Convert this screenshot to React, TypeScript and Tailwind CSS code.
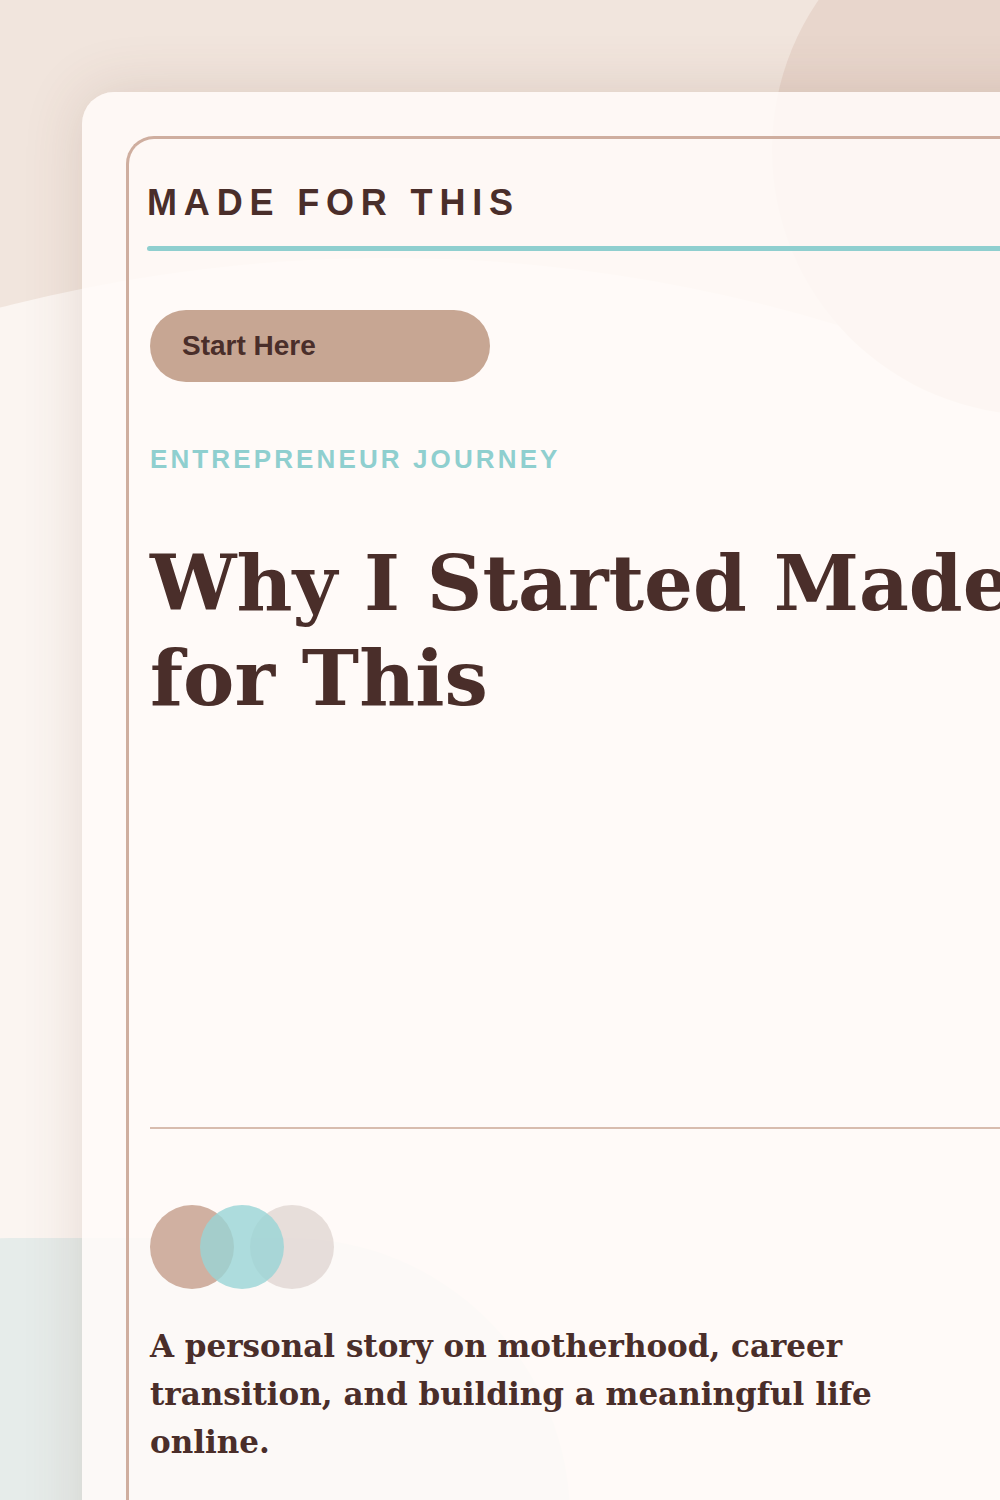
import React from 'react';

const sans = { fontFamily: '"Liberation Sans", Arial, sans-serif' };
const serif = { fontFamily: '"DejaVu Serif", Georgia, serif' };

const Backdrop = () => (
	<>
		<div className="absolute left-[-1154px] top-[258px] h-[3084px] w-[3084px] rounded-full bg-[#fbf5f1]" />
		<div className="absolute left-[-270px] top-[1238px] h-[560px] w-[840px] rounded-full bg-[#e6ecea]" />
		<div className="absolute left-[772px] top-[-115px] h-[530px] w-[600px] rounded-full bg-[#e8d6cc]" />
	</>
);

const Dots = () => (
	<div className="flex">
		<div className="h-[84px] w-[84px] rounded-full bg-[#c49e8b]/80" />
		<div className="relative z-10 -ml-[34px] h-[84px] w-[84px] rounded-full bg-[#98d5d6]/80" />
		<div className="-ml-[34px] h-[84px] w-[84px] rounded-full bg-[#ddd2cd]/70" />
	</div>
);

export default function App() {
	return (
		<div className="relative h-[1500px] w-[1000px] overflow-hidden bg-[#f1e5dd]">
			<Backdrop />
			<div className="relative ml-[82px] mt-[92px] h-[1500px] w-[1000px] rounded-tl-[32px] bg-[rgba(255,251,248,0.88)] pl-[44px] pt-[44px] shadow-[0_0_60px_rgba(110,70,50,0.16)]">
				<div className="h-[1400px] rounded-tl-[28px] border-l-[3px] border-t-[3px] border-[#cfae9f] pl-[18px] pt-[43px] text-[#4a2e2a]">
					<div
						className="text-[36px] font-bold uppercase leading-[41px] tracking-[0.19em]"
						style={sans}
					>
						Made for This
					</div>
					<div className="mt-[23px] h-[5px] rounded-full bg-[#8fcfcf]" />

					<div className="ml-[3px]">
						<button
							type="button"
							className="mt-[59px] flex h-[72px] w-[340px] items-center rounded-full bg-[#c7a693] pl-[32px] text-[28px] font-bold leading-[32px] text-[#4a2e2a]"
							style={sans}
						>
							Start Here
						</button>

						<div
							className="mt-[62px] text-[26px] font-bold uppercase leading-[30px] tracking-[0.12em] text-[#8fcfcf]"
							style={sans}
						>
							Entrepreneur Journey
						</div>

						<h1
							className="mt-[62px] whitespace-nowrap text-[77px] font-bold leading-[95px]"
							style={serif}
						>
							Why I Started Made
							<br />
							for This
						</h1>

						<div className="mt-[401px] h-[2px] bg-[#d8bcae]" />

						<div className="mt-[76px]">
							<Dots />
						</div>

						<p
							className="mt-[33px] whitespace-nowrap text-[31px] font-bold leading-[48px]"
							style={serif}
						>
							A personal story on motherhood, career
							<br />
							transition, and building a meaningful life
							<br />
							online.
						</p>
					</div>
				</div>
			</div>
		</div>
	);
}
